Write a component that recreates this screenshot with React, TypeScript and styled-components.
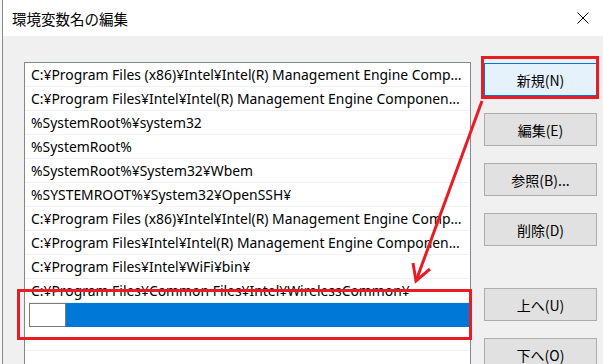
import React from "react";
import styled, { createGlobalStyle } from "styled-components";

const GlobalStyle = createGlobalStyle`
  html, body {
    margin: 0;
    padding: 0;
    width: 603px;
    height: 364px;
    overflow: hidden;
    background: #ffffff;
  }
`;

const Screen = styled.div`
  position: relative;
  display: flex;
  width: 603px;
  height: 364px;
  overflow: hidden;
  background: #f3f3f3;
`;

const BehindEdge = styled.div`
  width: 2px;
  flex: none;
  background: #f7f7f7;
`;

const Dialog = styled.div`
  flex: 1;
  display: flex;
  flex-direction: column;
  border-left: 1px solid #8a8a8a;
  background: #f0f0f0;
`;

const TitleBar = styled.div`
  height: 36px;
  flex: none;
  display: flex;
  align-items: center;
  justify-content: space-between;
  padding: 0 14px 0 9px;
  background: #ffffff;
  font-family: "Noto Sans CJK JP", sans-serif;
  font-size: 14.5px;
  color: #000000;
`;

const Body = styled.div`
  flex: 1;
  display: flex;
  align-items: flex-start;
  padding: 26px 0 0 21px;
`;

const ListBox = styled.div`
  width: 445px;
  height: 320px;
  flex: none;
  border: 1px solid #828790;
  background: #ffffff;
`;

const Row = styled.div`
  height: 23px;
  display: flex;
  align-items: center;
  border-bottom: 1px solid #f0f0f0;
  padding: 0 7px 0 6px;
  font-family: "Noto Sans", sans-serif;
  font-size: 13.9px;
  color: #000000;
  white-space: nowrap;
  overflow: hidden;
`;

const RowText = styled.span`
  overflow: hidden;
  text-overflow: ellipsis;
`;

const EditRow = styled.div`
  height: 24px;
  display: flex;
  padding-left: 4px;
  background: #ffffff;
`;

const EditInput = styled.div`
  width: 35px;
  height: 22px;
  flex: none;
  border: 1px solid #7a7a7a;
  background: #ffffff;
`;

const Selection = styled.div`
  flex: 1;
  background: #0078d7;
`;

const ButtonColumn = styled.div`
  display: flex;
  flex-direction: column;
  margin-left: 13px;
  margin-top: 1px;
  width: 113px;
`;

const Button = styled.div<{ $primary?: boolean; $gap: number }>`
  height: 31px;
  margin-top: ${(p) => p.$gap}px;
  display: flex;
  align-items: center;
  justify-content: center;
  border: 1px solid ${(p) => (p.$primary ? "#0078d7" : "#adadad")};
  background: ${(p) => (p.$primary ? "#e5f1fb" : "#e1e1e1")};
  font-family: "Noto Sans CJK JP", sans-serif;
  font-size: 14px;
  color: #000000;
`;

const Overlay = styled.svg`
  position: absolute;
  left: 0;
  top: 0;
  pointer-events: none;
`;

const paths = [
  "C:¥Program Files (x86)¥Intel¥Intel(R) Management Engine Components¥DAL",
  "C:¥Program Files¥Intel¥Intel(R) Management Engine Components¥DAL",
  "%SystemRoot%¥system32",
  "%SystemRoot%",
  "%SystemRoot%¥System32¥Wbem",
  "%SYSTEMROOT%¥System32¥OpenSSH¥",
  "C:¥Program Files (x86)¥Intel¥Intel(R) Management Engine Components¥IPT",
  "C:¥Program Files¥Intel¥Intel(R) Management Engine Components¥IPT",
  "C:¥Program Files¥Intel¥WiFi¥bin¥",
  "C:¥Program Files¥Common Files¥Intel¥WirelessCommon¥",
];

const buttons = [
  { label: "新規(N)", gap: 0, primary: true },
  { label: "編集(E)", gap: 17 },
  { label: "参照(B)...", gap: 17 },
  { label: "削除(D)", gap: 17 },
  { label: "上へ(U)", gap: 42 },
  { label: "下へ(O)", gap: 17 },
];

function CloseIcon() {
  return (
    <svg width="12" height="12" viewBox="0 0 12 12">
      <path d="M0.5 0.5 L11.5 11.5 M11.5 0.5 L0.5 11.5" stroke="#000" strokeWidth="1" />
    </svg>
  );
}

export default function App() {
  return (
    <>
      <GlobalStyle />
      <Screen>
        <BehindEdge />
        <Dialog>
          <TitleBar>
            <span>環境変数名の編集</span>
            <CloseIcon />
          </TitleBar>
          <Body>
            <ListBox>
              {paths.map((p, i) => (
                <Row key={i}>
                  <RowText>{p}</RowText>
                </Row>
              ))}
              <EditRow>
                <EditInput />
                <Selection />
              </EditRow>
              <Row />
              <Row />
            </ListBox>
            <ButtonColumn>
              {buttons.map((b) => (
                <Button key={b.label} $primary={b.primary} $gap={b.gap}>
                  {b.label}
                </Button>
              ))}
            </ButtonColumn>
          </Body>
        </Dialog>
        <Overlay width="603" height="364">
          <g fill="none" stroke="#e81c24" strokeWidth="3">
            <rect x="482.5" y="57.5" width="115" height="40" />
            <rect x="18.5" y="290.5" width="452" height="48" />
            <path d="M482 101 L416 281" />
            <path d="M413 263 L416 281 L430 269" strokeLinejoin="miter" />
          </g>
        </Overlay>
      </Screen>
    </>
  );
}
